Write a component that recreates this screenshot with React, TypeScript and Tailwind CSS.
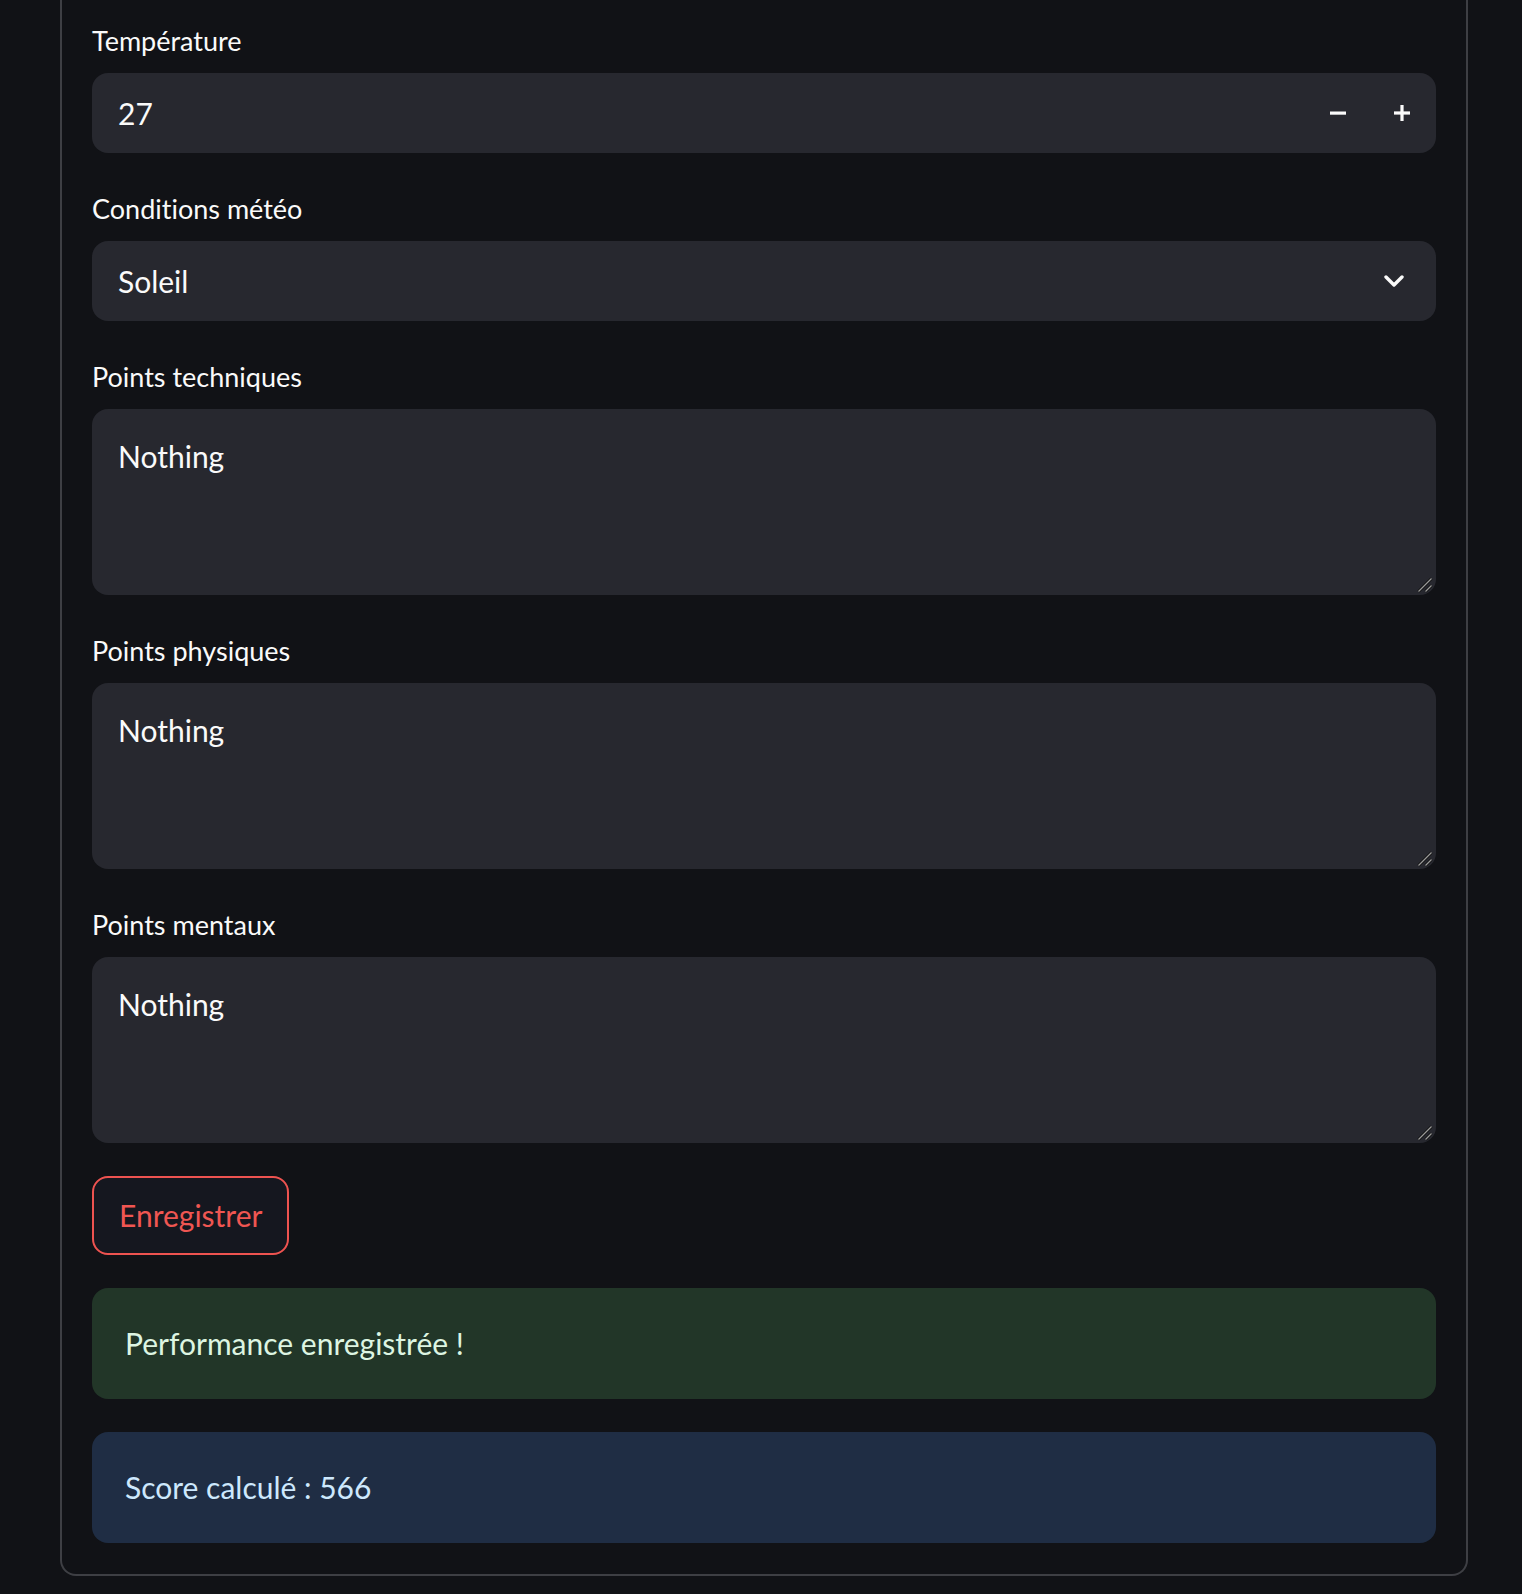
import React from "react";

const font = "font-['Lato','Open_Sans',sans-serif] [font-variant-ligatures:none]";

function Label({ children }: { children: React.ReactNode }) {
  return (
    <div className="h-[48px] mb-[8px] flex items-center text-[27px] text-[#fafafa]">
      {children}
    </div>
  );
}

function ResizeHandle() {
  return (
    <svg
      className="absolute right-[3px] bottom-[2px]"
      width="16"
      height="16"
      viewBox="0 0 16 16"
    >
      <line x1="1.5" y1="14.5" x2="14.5" y2="1.5" stroke="#111" strokeWidth="3" />
      <line x1="1.5" y1="14.5" x2="14.5" y2="1.5" stroke="#9a9a9a" strokeWidth="1.3" />
      <line x1="8.5" y1="14.5" x2="14.5" y2="8.5" stroke="#111" strokeWidth="3" />
      <line x1="8.5" y1="14.5" x2="14.5" y2="8.5" stroke="#9a9a9a" strokeWidth="1.3" />
    </svg>
  );
}

function TextArea({ value }: { value: string }) {
  return (
    <div className="relative h-[186px] rounded-[16px] bg-[#27282f] pl-[26px] pt-[23px] text-[30px] leading-[48px] text-[#fafafa]">
      {value}
      <ResizeHandle />
    </div>
  );
}

export default function App() {
  return (
    <div className={`min-h-[1594px] bg-[#111216] ${font}`}>
      <div className="ml-[60px] w-[1408px] border-2 border-t-0 border-[#3e3f44] rounded-b-[16px] px-[30px] pt-[17px] pb-[31px] flex flex-col">
        <div className="flex flex-col gap-[32px]">
          <div>
            <Label>Température</Label>
            <div className="h-[80px] rounded-[16px] bg-[#27282f] flex items-center">
              <div className="flex-1 pl-[26px] text-[30px] text-[#fafafa]">27</div>
              <div className="flex h-full items-center pr-[2px]">
                <button className="w-[64px] h-full flex items-center justify-center">
                  <svg width="16" height="16" viewBox="0 0 16 16">
                    <rect x="0" y="6.5" width="16" height="3.2" fill="#fafafa" />
                  </svg>
                </button>
                <button className="w-[64px] h-full flex items-center justify-center">
                  <svg width="16" height="16" viewBox="0 0 16 16">
                    <rect x="0" y="6.4" width="16" height="3.2" fill="#fafafa" />
                    <rect x="6.4" y="0" width="3.2" height="16" fill="#fafafa" />
                  </svg>
                </button>
              </div>
            </div>
          </div>

          <div>
            <Label>Conditions météo</Label>
            <div className="h-[80px] rounded-[16px] bg-[#27282f] flex items-center justify-between pl-[26px] pr-[32px]">
              <span className="text-[30px] text-[#fafafa]">Soleil</span>
              <svg width="20" height="12" viewBox="0 0 20 12">
                <path
                  d="M2 2 L10 10 L18 2"
                  fill="none"
                  stroke="#fafafa"
                  strokeWidth="3.4"
                  strokeLinecap="round"
                  strokeLinejoin="round"
                />
              </svg>
            </div>
          </div>

          <div>
            <Label>Points techniques</Label>
            <TextArea value="Nothing" />
          </div>

          <div>
            <Label>Points physiques</Label>
            <TextArea value="Nothing" />
          </div>

          <div>
            <Label>Points mentaux</Label>
            <TextArea value="Nothing" />
          </div>
        </div>

        <div className="mt-[33px]">
          <button className="h-[79px] px-[25px] rounded-[16px] border-2 border-[#ee5350] bg-[#15171f] text-[30px] text-[#f05652]">
            Enregistrer
          </button>
        </div>

        <div className="mt-[33px] h-[111px] rounded-[16px] bg-[#223628] flex items-center px-[33px] text-[30px] text-[#ddf5e2]">
          Performance enregistrée !
        </div>

        <div className="mt-[33px] h-[111px] rounded-[16px] bg-[#1f2d44] flex items-center px-[33px] text-[30px] text-[#cde8fd]">
          Score calculé : 566
        </div>
      </div>
    </div>
  );
}
